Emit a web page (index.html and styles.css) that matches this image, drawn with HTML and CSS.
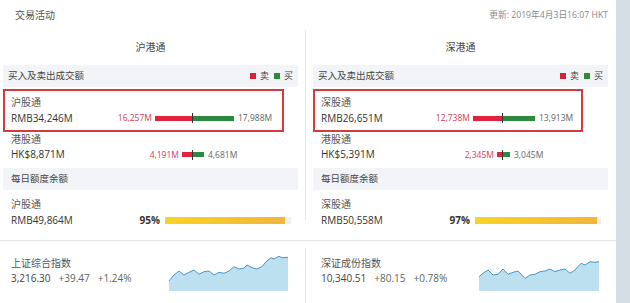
FILE: index.html
```html
<!DOCTYPE html>
<html lang="zh-CN">
<head>
  <meta charset="UTF-8">
  <title>交易活动</title>
  <link rel="stylesheet" href="styles.css">
</head>
<body>
<div class="page">
  <div class="main">
    <div class="title-row">
      <span class="title">交易活动</span>
      <span class="updated">更新: 2019年4月3日16:07 HKT</span>
    </div>

    <div class="section top">
      <div class="col">
        <div class="col-head">沪港通</div>
        <div class="band band-trade">
          <span>买入及卖出成交额</span>
          <span class="legend"><i class="sq sq-sell"></i>卖<i class="sq sq-buy"></i>买</span>
        </div>
        <div class="row hl">
          <div class="name">沪股通</div>
          <div class="line">
            <span class="amount">RMB34,246M</span>
            <span class="sell"><em>16,257M</em><b class="bar red" style="width:37px"></b></span>
            <span class="buy"><i class="tick"></i><b class="bar green" style="width:41px"></b><em>17,988M</em></span>
          </div>
        </div>
        <div class="row row-south">
          <div class="name">港股通</div>
          <div class="line">
            <span class="amount">HK$8,871M</span>
            <span class="sell"><em>4,191M</em><b class="bar red" style="width:10px"></b></span>
            <span class="buy"><i class="tick"></i><b class="bar green" style="width:11px"></b><em>4,681M</em></span>
          </div>
        </div>
        <div class="band">每日额度余额</div>
        <div class="row row-quota">
          <div class="name">沪股通</div>
          <div class="line">
            <span class="amount">RMB49,864M</span>
            <span class="pct">95%</span>
            <span class="track"><b class="fill" style="width:95%"></b></span>
          </div>
        </div>
      </div>

      <div class="divider"></div>

      <div class="col col-right">
        <div class="col-head">深港通</div>
        <div class="band band-trade">
          <span>买入及卖出成交额</span>
          <span class="legend"><i class="sq sq-sell"></i>卖<i class="sq sq-buy"></i>买</span>
        </div>
        <div class="row hl">
          <div class="name">深股通</div>
          <div class="line">
            <span class="amount">RMB26,651M</span>
            <span class="sell"><em>12,738M</em><b class="bar red" style="width:29px"></b></span>
            <span class="buy"><i class="tick"></i><b class="bar green" style="width:32px"></b><em>13,913M</em></span>
          </div>
        </div>
        <div class="row row-south">
          <div class="name">港股通</div>
          <div class="line">
            <span class="amount">HK$5,391M</span>
            <span class="sell"><em>2,345M</em><b class="bar red" style="width:5px"></b></span>
            <span class="buy"><i class="tick"></i><b class="bar green" style="width:7px"></b><em>3,045M</em></span>
          </div>
        </div>
        <div class="band">每日额度余额</div>
        <div class="row row-quota">
          <div class="name">深股通</div>
          <div class="line">
            <span class="amount">RMB50,558M</span>
            <span class="pct">97%</span>
            <span class="track"><b class="fill" style="width:97%"></b></span>
          </div>
        </div>
      </div>
    </div>

    <div class="section bottom">
      <div class="col idx">
        <div>
          <div class="name">上证综合指数</div>
          <div class="idx-nums"><span>3,216.30</span><span class="chg">+39.47</span><span class="chg">+1.24%</span></div>
        </div>
        <svg class="spark" width="120" height="36" viewBox="0 0 120 36">
          <path class="area" d="M0,26 L5,20 L10,16 L15,20 L20,17.3 L25,15 L30,19.3 L35,16.7 L40,16 L45,20 L50,17.3 L55,18.3 L60,16 L65,11.7 L70,14 L75,13.3 L78,10 L83,12.7 L88,14 L93,11.7 L97,6.7 L102,2.7 L105,4 L110,1.3 L113,2.7 L119,2.3 L119,36 L0,36 Z"/>
          <path class="stroke" d="M0,26 L5,20 L10,16 L15,20 L20,17.3 L25,15 L30,19.3 L35,16.7 L40,16 L45,20 L50,17.3 L55,18.3 L60,16 L65,11.7 L70,14 L75,13.3 L78,10 L83,12.7 L88,14 L93,11.7 L97,6.7 L102,2.7 L105,4 L110,1.3 L113,2.7 L119,2.3"/>
        </svg>
      </div>

      <div class="divider"></div>

      <div class="col idx">
        <div>
          <div class="name">深证成份指数</div>
          <div class="idx-nums"><span>10,340.51</span><span class="chg">+80.15</span><span class="chg">+0.78%</span></div>
        </div>
        <svg class="spark" width="120" height="36" viewBox="0 0 120 36">
          <path class="area" d="M0,21.7 L4,18.3 L9,15 L14,20 L19,19.3 L24,14 L29,19.3 L34,17.3 L39,16 L46,23.3 L51,20 L56,19.3 L61,16.7 L66,16 L71,14 L76,16.7 L81,15 L86,14 L91,18.3 L96,15 L99,11.7 L102,8.3 L106,10 L111,6.7 L116,7.3 L120,6.7 L120,36 L0,36 Z"/>
          <path class="stroke" d="M0,21.7 L4,18.3 L9,15 L14,20 L19,19.3 L24,14 L29,19.3 L34,17.3 L39,16 L46,23.3 L51,20 L56,19.3 L61,16.7 L66,16 L71,14 L76,16.7 L81,15 L86,14 L91,18.3 L96,15 L99,11.7 L102,8.3 L106,10 L111,6.7 L116,7.3 L120,6.7"/>
        </svg>
      </div>
    </div>
  </div>
  <div class="scroll"></div>
</div>
</body>
</html>
```

FILE: styles.css
```css
body {
  margin: 0;
  background: #fff;
  font-family: "Open Sans", "Noto Sans CJK SC", sans-serif;
  color: #444;
}
.page {
  display: flex;
  width: 630px;
  height: 303px;
  overflow: hidden;
}
.main {
  width: 616px;
}
.scroll {
  width: 14px;
  background-color: #d5dde5;
}
.title-row {
  height: 28px;
  display: flex;
  justify-content: space-between;
  align-items: center;
  padding: 0 8px 0 15px;
}
.title {
  font-size: 10px;
  color: #555;
}
.updated {
  font-size: 8.7px;
  color: #8a8a8a;
}
.section {
  display: flex;
  padding: 0 8px 0 3px;
}
.top {
  padding-top: 2px;
  padding-bottom: 12px;
  border-bottom: 1px solid #e5e8ec;
  box-shadow: 0 1px 2px rgba(0, 0, 0, 0.03);
}
.col {
  width: 295px;
}
.divider {
  width: 1px;
  background-color: #e6e9ed;
  margin: 0 7px 8px;
}
.col-head {
  height: 35px;
  line-height: 35px;
  text-align: center;
  font-size: 10px;
  color: #444;
}
.band {
  height: 22px;
  line-height: 22px;
  background-color: #f2f4f7;
  padding: 0 5px 0 8px;
  font-size: 9.5px;
  color: #444;
}
.band-trade {
  display: flex;
  justify-content: space-between;
  align-items: center;
  padding-left: 5px;
  margin-bottom: 2px;
}
.legend {
  display: flex;
  align-items: center;
  font-size: 9px;
}
.sq {
  width: 6px;
  height: 6px;
  margin: 0 4px 0 5px;
}
.sq-sell {
  background-color: #d6233a;
}
.sq-buy {
  background-color: #2a8a3c;
}
.row {
  padding-left: 8px;
}
.name {
  font-size: 10px;
  color: #555;
  line-height: 16px;
}
.line {
  display: flex;
  align-items: center;
  line-height: 16px;
}
.amount {
  width: 89px;
  font-size: 10px;
  color: #333;
}
.hl {
  border: 2px solid #d63a3d;
  margin-right: 14px;
  padding: 3px 0 4px 6px;
}
.col-right .hl {
  margin-right: 25px;
}
.row-south {
  padding-bottom: 6px;
}
.row-south .name,
.row-south .line {
  line-height: 15px;
}
.row-quota {
  padding-top: 6px;
}
.sell {
  width: 92px;
  display: flex;
  justify-content: flex-end;
  align-items: center;
}
.buy {
  display: flex;
  align-items: center;
}
.sell em,
.buy em {
  font-style: normal;
  font-size: 8.5px;
}
.sell em {
  color: #d3405a;
  margin-right: 3px;
}
.buy em {
  color: #666;
  margin-left: 4px;
}
.bar {
  display: block;
  height: 5px;
}
.red {
  background-color: #e2233d;
}
.green {
  background-color: #2b8a3e;
}
.tick {
  display: block;
  width: 1px;
  height: 10px;
  background-color: #333;
}
.pct {
  width: 60px;
  text-align: right;
  font-size: 10px;
  font-weight: bold;
  color: #333;
}
.track {
  display: block;
  width: 126px;
  height: 7px;
  margin-left: 5px;
  background-color: #eeeff1;
}
.fill {
  display: block;
  height: 7px;
  background: linear-gradient(to right, #f8d424, #f2b43a);
}
.bottom {
  height: 62px;
}
.bottom .divider {
  margin: 7px 7px 0;
}
.idx {
  display: flex;
  justify-content: space-between;
  padding: 15px 9px 0 8px;
  box-sizing: border-box;
}
.idx .name {
  line-height: 15px;
}
.idx-nums {
  display: flex;
  gap: 8px;
  font-size: 10px;
  line-height: 15px;
  color: #444;
}
.chg {
  color: #566a5c;
}
.spark {
  margin-top: -1px;
}
.area {
  fill: #bde0f1;
}
.stroke {
  fill: none;
  stroke: #4698cc;
  stroke-width: 1;
}
```
